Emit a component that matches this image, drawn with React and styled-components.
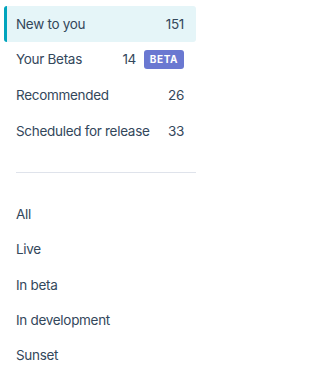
import React from 'react';
import styled, { createGlobalStyle } from 'styled-components';

const GlobalStyle = createGlobalStyle`
  html, body {
    margin: 0;
    padding: 0;
    background: #ffffff;
  }
  body {
    font-family: 'Inter', 'Noto Sans', sans-serif;
    color: #33475b;
  }
`;

const Sidebar = styled.nav`
  width: 200px;
  box-sizing: border-box;
  padding: 6px 4px 0 4px;
`;

const List = styled.ul`
  list-style: none;
  margin: 0;
  padding: 0;
`;

const Item = styled.li`
  position: relative;
  display: flex;
  align-items: center;
  height: ${(p) => p.$height}px;
  padding: 0 12px;
  border-radius: 3px;
  font-size: 13.5px;
  font-weight: 400;
  letter-spacing: -0.3px;
  background: ${(p) => (p.$active ? '#e5f5f8' : 'transparent')};

  &::before {
    content: '';
    display: ${(p) => (p.$active ? 'block' : 'none')};
    position: absolute;
    left: 0;
    top: 0;
    bottom: 0;
    width: 3px;
    border-radius: 3px 0 0 3px;
    background: #00a4bd;
  }
`;

const Label = styled.span`
  flex: 1;
  white-space: nowrap;
`;

const Count = styled.span`
  font-size: 13.5px;
`;

const Badge = styled.span`
  display: inline-flex;
  align-items: center;
  justify-content: center;
  margin-left: 8px;
  width: 40px;
  height: 19px;
  border-radius: 3px;
  background: #6a78d1;
  color: #ffffff;
  font-size: 10px;
  font-weight: 700;
  letter-spacing: 0.6px;
`;

const Divider = styled.hr`
  border: none;
  border-top: 1px solid #dfe3eb;
  margin: 23.6px 0 23.7px 12px;
`;

const featured = [
  { label: 'New to you', count: 151, active: true },
  { label: 'Your Betas', count: 14, badge: 'BETA' },
  { label: 'Recommended', count: 26 },
  { label: 'Scheduled for release', count: 33 },
];

const statuses = ['All', 'Live', 'In beta', 'In development', 'Sunset'];

export default function App() {
  return (
    <>
      <GlobalStyle />
      <Sidebar>
        <List>
          {featured.map((f) => (
            <Item key={f.label} $active={f.active} $height={35.6}>
              <Label>{f.label}</Label>
              <Count>{f.count}</Count>
              {f.badge && <Badge>{f.badge}</Badge>}
            </Item>
          ))}
        </List>
        <Divider />
        <List>
          {statuses.map((s) => (
            <Item key={s} $height={35.2}>
              <Label>{s}</Label>
            </Item>
          ))}
        </List>
      </Sidebar>
    </>
  );
}
